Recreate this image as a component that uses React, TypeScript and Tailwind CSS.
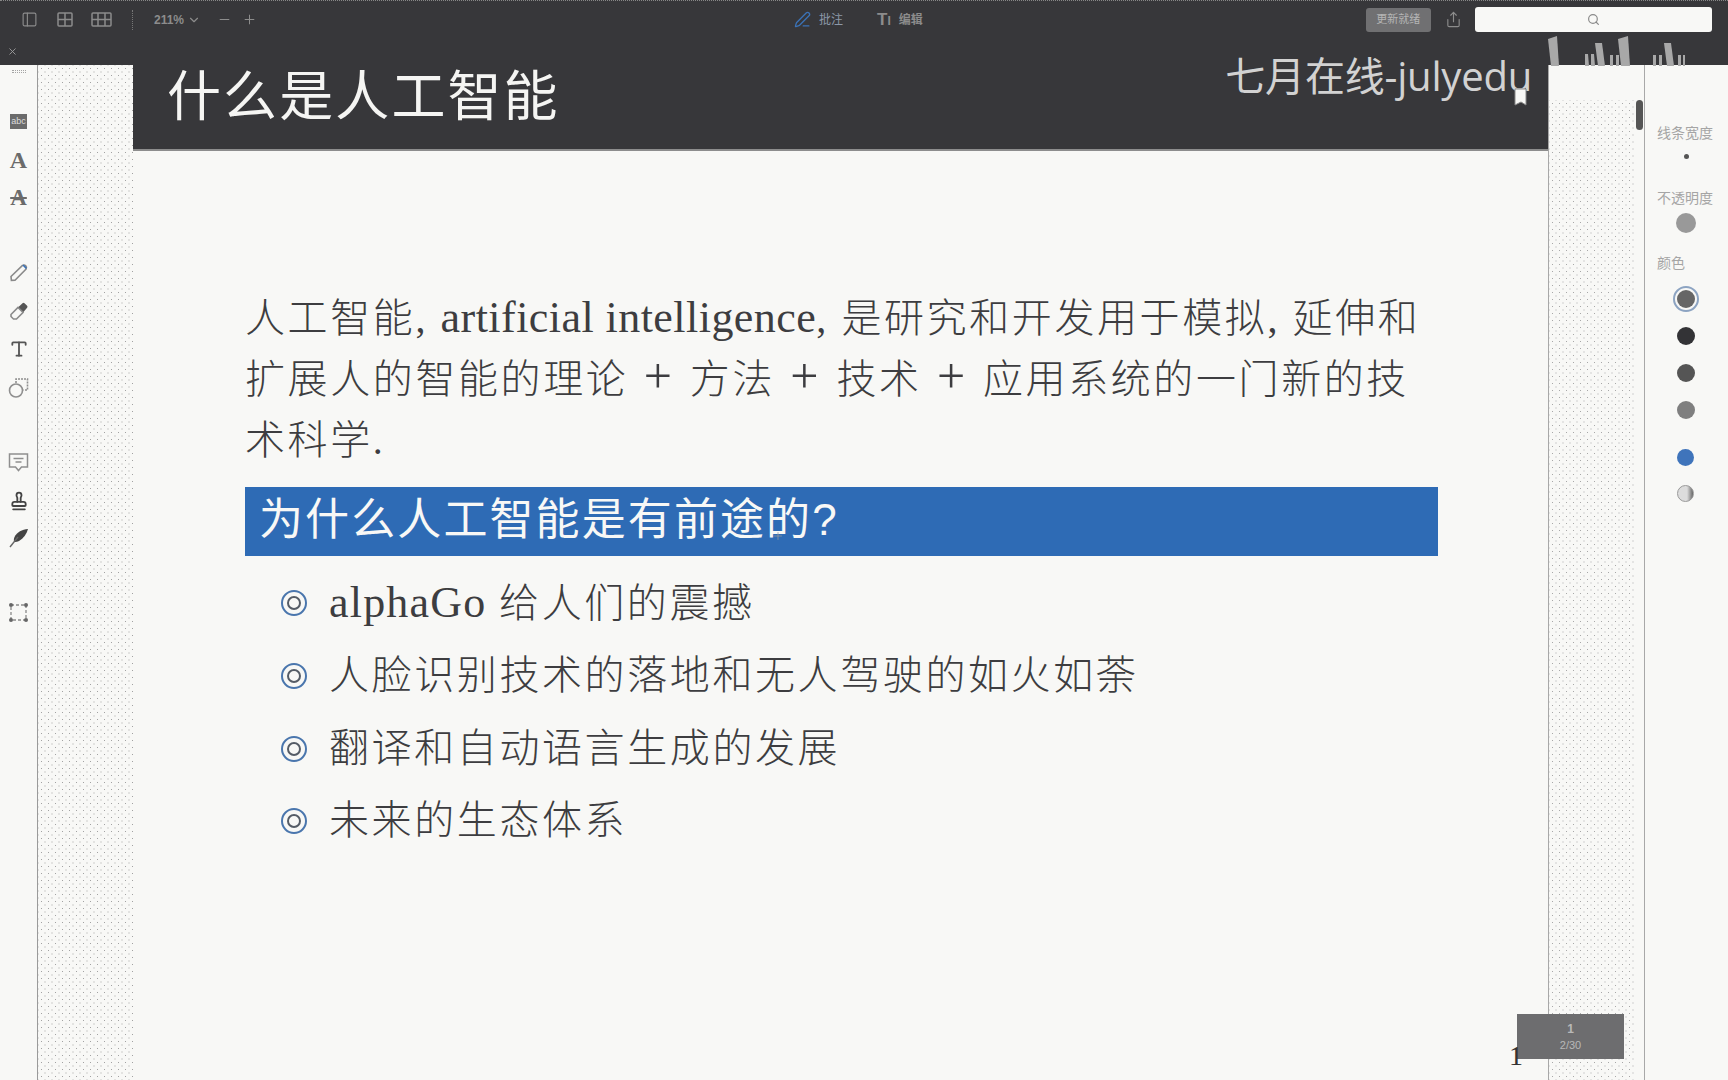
import React from "react"
import {
  ChevronDown,
  Minus,
  PanelLeft,
  PenLine,
  Plus,
  Search,
  Share,
  Stamp,
  Type,
  X,
} from "lucide-react"

const bullets = [
  "人脸识别技术的落地和无人驾驶的如火如荼",
  "翻译和自动语言生成的发展",
  "未来的生态体系",
]

function Bullet() {
  return (
    <svg width="28" height="28" viewBox="0 0 28 28" fill="none" className="shrink-0">
      <circle cx="14" cy="14" r="12" stroke="#4a76ad" strokeWidth="2" />
      <circle cx="14" cy="14" r="6" stroke="#555c66" strokeWidth="2" />
    </svg>
  )
}

function GridIcon({ wide }: { wide?: boolean }) {
  return (
    <svg width={wide ? 21 : 16} height="15" viewBox={wide ? "0 0 21 15" : "0 0 16 15"} fill="none" stroke="#8c8c8c" strokeWidth="1.5">
      <rect x="1" y="1" width={wide ? 19 : 14} height="13" rx="1" />
      <path d={wide ? "M7 1v13M14 1v13M1 7.5h19" : "M8 1v13M1 7.5h14"} />
    </svg>
  )
}

// the broken stripes that stick out above the right gutter
function Stripes() {
  return (
    <svg width="140" height="30" viewBox="0 0 140 30" className="absolute left-[1545px] top-[36px]" fill="#a8a8a8">
      <path d="M3 3 12 0 14 30H6Z" />
      <path d="M40 18h3l1 12h-4ZM46 18h3l1 12h-4Z" />
      <path d="M50 7h7l3 23h-7Z" />
      <path d="M65 19h3v11h-3ZM71 19h3v11h-3Z" />
      <path d="M73 3 83 0l2 30h-9Z" />
      <path d="M108 19h3v11h-3ZM114 19h3v11h-3Z" />
      <path d="M119 7h7l3 23h-7Z" />
      <path d="M133 19h3v11h-3ZM138 19h2v11h-2Z" />
    </svg>
  )
}

function PencilIcon() {
  return (
    <svg width="20" height="20" viewBox="0 0 20 20" fill="none" stroke="#8a8a8a" strokeWidth="1.6" className="mt-[52px]">
      <path d="M2 14.5 13.5 3.5a2.6 2.6 0 0 1 3.6 3.6L6 18.2 2.4 18.4Z" />
      <path d="M14 3l3.4 3.4" stroke="#3b73b8" />
    </svg>
  )
}

function EraserIcon() {
  return (
    <svg width="20" height="20" viewBox="0 0 20 20" className="mt-[19px]">
      <path d="M2 13.5 9 6.5l5 5-6.5 6.5H4.5L2 15.5Z" fill="none" stroke="#8a8a8a" strokeWidth="1.6" />
      <path d="M9.5 6 13.5 2.2a1.5 1.5 0 0 1 2 0l2.6 2.6a1.5 1.5 0 0 1 0 2L14.5 11Z" fill="#555" />
    </svg>
  )
}

function ShapesIcon() {
  return (
    <svg width="21" height="21" viewBox="0 0 21 21" fill="none" stroke="#8f8f8f" strokeWidth="1.6" className="mt-[18px]">
      <path d="M8 6V2h11.5v11h-4" strokeDasharray="2 1" />
      <circle cx="8" cy="13.5" r="6.5" />
    </svg>
  )
}

function CommentIcon() {
  return (
    <svg width="21" height="21" viewBox="0 0 21 21" fill="none" stroke="#8f8f8f" strokeWidth="1.5" className="mt-[54px]">
      <path d="M1.5 2h18v13h-6l-3 3.5-3-3.5h-6Z" />
      <path d="M5.5 6.5h10M7.5 10h6" />
    </svg>
  )
}

function QuillIcon() {
  return (
    <svg width="20" height="20" viewBox="0 0 20 20" className="mt-[17px]">
      <path d="M19 1C13 1.500 8 4 5.500 9c-.7 1.500-.8 3.500-.5 5 2 0 3.500-.3 5-1 4.500-2.500 7.500-7 9-12Z" fill="#444" />
      <path d="M1 19 9 9" stroke="#666" strokeWidth="1.4" />
    </svg>
  )
}

function SelectIcon() {
  return (
    <svg width="21" height="21" viewBox="0 0 21 21" fill="none" className="mt-[54px]">
      <rect x="3" y="3" width="15" height="15" stroke="#8a8a8a" strokeWidth="1.3" strokeDasharray="3 2" />
      <circle cx="3" cy="3" r="2" fill="#666" />
      <circle cx="18" cy="3" r="2" fill="#666" />
      <circle cx="3" cy="18" r="2" fill="#666" />
      <circle cx="18" cy="18" r="2" fill="#666" />
    </svg>
  )
}

function LeftTools() {
  return (
    <aside className="w-[38px] shrink-0 bg-[#f8f8f6] border-r border-[#9a9a9a] flex flex-col items-center text-[#6b6b6b]">
      <div className="mt-[5px] h-[3px] w-[14px] border-y border-dotted border-[#a5a5a5]" />
      <div className="mt-[41px] h-[15px] w-[17px] bg-[#6b6b6b] flex items-center justify-center text-[9px] leading-none text-[#ddd]">abc</div>
      <div className="mt-[19px] h-[24px] text-[24px] leading-[24px] font-bold font-['Liberation_Serif',serif]">A</div>
      <div className="mt-[14px] h-[24px] text-[23px] leading-[24px] font-bold line-through font-['Liberation_Serif',serif]">A</div>
      <PencilIcon />
      <EraserIcon />
      <Type size={20} strokeWidth={2.2} className="mt-[18px] text-[#555]" />
      <ShapesIcon />
      <CommentIcon />
      <Stamp size={20} strokeWidth={2.2} className="mt-[18px] text-[#444]" />
      <QuillIcon />
      <SelectIcon />
    </aside>
  )
}

function RightPanel() {
  return (
    <aside className="w-[84px] shrink-0 bg-[#f8f8f6] border-l border-[#a8a8a8] flex flex-col pl-[12px] text-[14px] leading-[16px] text-[#a5a5a5]">
      <div className="mt-[60px]">线条宽度</div>
      <div className="mt-[13px] ml-[27px] size-[5px] rounded-full bg-[#555]" />
      <div className="mt-[31px]">不透明度</div>
      <div className="mt-[7px] ml-[19px] size-[20px] rounded-full bg-[#999]" />
      <div className="mt-[22px]">颜色</div>
      <div className="mt-[15px] ml-[16px] size-[26px] rounded-full border-2 border-[#8da4c2] bg-[#f8f8f6] flex items-center justify-center">
        <div className="size-[18px] rounded-full bg-[#666]" />
      </div>
      <div className="mt-[15px] ml-[20px] size-[18px] rounded-full bg-[#333336]" />
      <div className="mt-[19px] ml-[20px] size-[18px] rounded-full bg-[#555]" />
      <div className="mt-[19px] ml-[20px] size-[18px] rounded-full bg-[#7f7f7f]" />
      <div className="mt-[30px] ml-[20px] size-[17px] rounded-full bg-[#3f74bb]" />
      <div className="mt-[19px] ml-[20px] size-[17px] rounded-full bg-[linear-gradient(90deg,#dcdcdc_60%,#666)] border border-[#999]" />
    </aside>
  )
}

export default function App() {
  return (
    <div className="relative w-[1728px] h-[1080px] overflow-hidden flex flex-col bg-[#37373a] font-['Liberation_Sans','Noto_Sans_CJK_SC',sans-serif]">
      {/* window toolbar */}
      <header className="h-[38px] shrink-0 flex items-center text-[#8c8c8c] text-[12px] border-t border-dotted border-[#888]">
        <PanelLeft size={17} strokeWidth={1.6} className="ml-[21px]" />
        <div className="ml-[19px]"><GridIcon /></div>
        <div className="ml-[18px]"><GridIcon wide /></div>
        <div className="ml-[20px] h-[20px] border-l border-dotted border-[#777]" />
        <span className="ml-[21px] font-bold">211%</span>
        <ChevronDown size={14} strokeWidth={2} className="ml-[3px]" />
        <Minus size={15} strokeWidth={1.6} className="ml-[16px]" />
        <Plus size={15} strokeWidth={1.6} className="ml-[10px]" />
        <PenLine size={17} strokeWidth={1.8} className="ml-[537px] text-[#3b73b8]" />
        <span className="ml-[8px] text-[#8c98a8]">批注</span>
        <span className="ml-[34px] text-[17px] font-semibold">T<span className="text-[12px]">I</span></span>
        <span className="ml-[8px] font-bold">编辑</span>
        <div className="ml-[443px] w-[65px] h-[24px] rounded-[3px] bg-[#707072] flex items-center justify-center text-[#b5b5b5] text-[11px]">更新就绪</div>
        <Share size={17} strokeWidth={1.6} className="ml-[14px]" />
        <div className="ml-[13px] w-[237px] h-[25px] rounded-[3px] bg-[#f8f8f6] flex items-center justify-center">
          <Search size={13} strokeWidth={2.2} className="text-[#8a8a8a]" />
        </div>
      </header>

      {/* tab row */}
      <div className="h-[27px] shrink-0 flex items-center relative text-[#9c9c9c]">
        <X size={11} strokeWidth={2} className="ml-[7px]" />
        <span className="ml-[813px] text-[11px] font-bold">* RecSys</span>
      </div>

      <div className="flex-1 flex min-h-0">
        <LeftTools />
        <div className="w-[95px] shrink-0 bg-[#f8f8f6] bg-[radial-gradient(#a2a2a2_0.7px,transparent_0.8px),radial-gradient(#a2a2a2_0.7px,transparent_0.8px)] bg-[length:7px_7px] bg-[position:0_0,3.5px_3.5px]" />

        {/* the slide */}
        <main className="flex-1 -mt-[27px] bg-[#f8f8f6] flex flex-col relative">
          <div className="h-[113px] shrink-0 bg-[#37373a] border-b-2 border-[#8d8d8d] flex items-center justify-between pt-[27px]">
            <h1 className="ml-[34px] -mt-[21px] text-[54px] tracking-[2.1px] leading-[62px] text-[#f5f5f3]">什么是人工智能</h1>
            <span className="mr-[16px] -mt-[62px] text-[40px] tracking-[-0.2px] leading-[44px] text-[#d2d2d2] font-['Open_Sans','Noto_Sans_CJK_SC',sans-serif]">七月在线-julyedu</span>
          </div>

          <section className="pl-[112px] pr-[110px] pt-[136px] font-['Liberation_Serif','Noto_Sans_CJK_SC',serif] text-[#3d3d40]">
            <p className="text-[40px] tracking-[2.6px] leading-[61px] font-light whitespace-nowrap">
              人工智能, <span className="text-[44px] tracking-[0.45px]">artificial intelligence</span>, 是研究和开发用于模拟, 延伸和
              <br />
              扩展人的智能的理论 <span className="mx-[2.7px] text-[50px] leading-none">+</span> 方法 <span className="mx-[2.7px] text-[50px] leading-none">+</span> 技术 <span className="mx-[2.7px] text-[50px] leading-none">+</span> 应用系统的一门新的技
              <br />
              术科学.
            </p>
            <h2 className="mt-[16px] h-[69px] bg-[#2e6bb5] pl-[14px] pt-[3px] text-[44px] tracking-[2.1px] leading-[60px] text-[#f8f8f6] font-['Liberation_Sans','Noto_Sans_CJK_SC',sans-serif]">
              为什么人工智能是有前途的?
            </h2>
            <ul className="mt-[11px]">
              <li className="h-[72.7px] flex items-center pl-[35px] gap-[21px] text-[40px] tracking-[2.6px] font-light whitespace-nowrap">
                <Bullet />
                <span>
                  <span className="text-[44px] tracking-[1.2px]">alphaGo</span> 给人们的震撼
                </span>
              </li>
              {bullets.map((b) => (
                <li key={b} className="h-[72.7px] flex items-center pl-[35px] gap-[21px] text-[40px] tracking-[2.6px] font-light whitespace-nowrap">
                  <Bullet />
                  <span>{b}</span>
                </li>
              ))}
            </ul>
          </section>
        </main>

        <div className="w-[96px] shrink-0 bg-[#f8f8f6] border-l border-[#a8a8a8] flex flex-col items-end">
          <div className="w-[7px] h-[30px] mt-[35px] mr-[1px] rounded-full bg-[#555]" />
          <div className="flex-1 w-full -mt-[30px] pr-[10px]">
            <div className="h-full bg-[radial-gradient(#a8a8a8_0.7px,transparent_0.8px),radial-gradient(#a8a8a8_0.7px,transparent_0.8px)] bg-[length:7px_7px] bg-[position:0_0,3.5px_3.5px]" />
          </div>
        </div>
        <RightPanel />
      </div>

      {/* overlays */}
      <Stripes />
      <svg width="13" height="18" viewBox="0 0 13 18" className="absolute left-[1514px] top-[88px]" fill="#f8f8f6" stroke="#888">
        <path d="M1 1h11v16l-5-3-6 3Z" />
      </svg>
      <Plus size={12} strokeWidth={1.5} className="absolute left-[772px] top-[530px] text-[#9a9a9a]" />
      <div className="absolute left-[1517px] top-[1014px] w-[107px] h-[45px] bg-[#6d6d6f] flex flex-col items-center justify-center text-[#b8b8b8] leading-[16px]">
        <span className="text-[12px] font-bold">1</span>
        <span className="text-[11px]">2/30</span>
      </div>
      <span className="absolute left-[1509px] top-[1040px] text-[28px] leading-[32px] text-[#333] font-['Liberation_Serif',serif]">1</span>
    </div>
  )
}
